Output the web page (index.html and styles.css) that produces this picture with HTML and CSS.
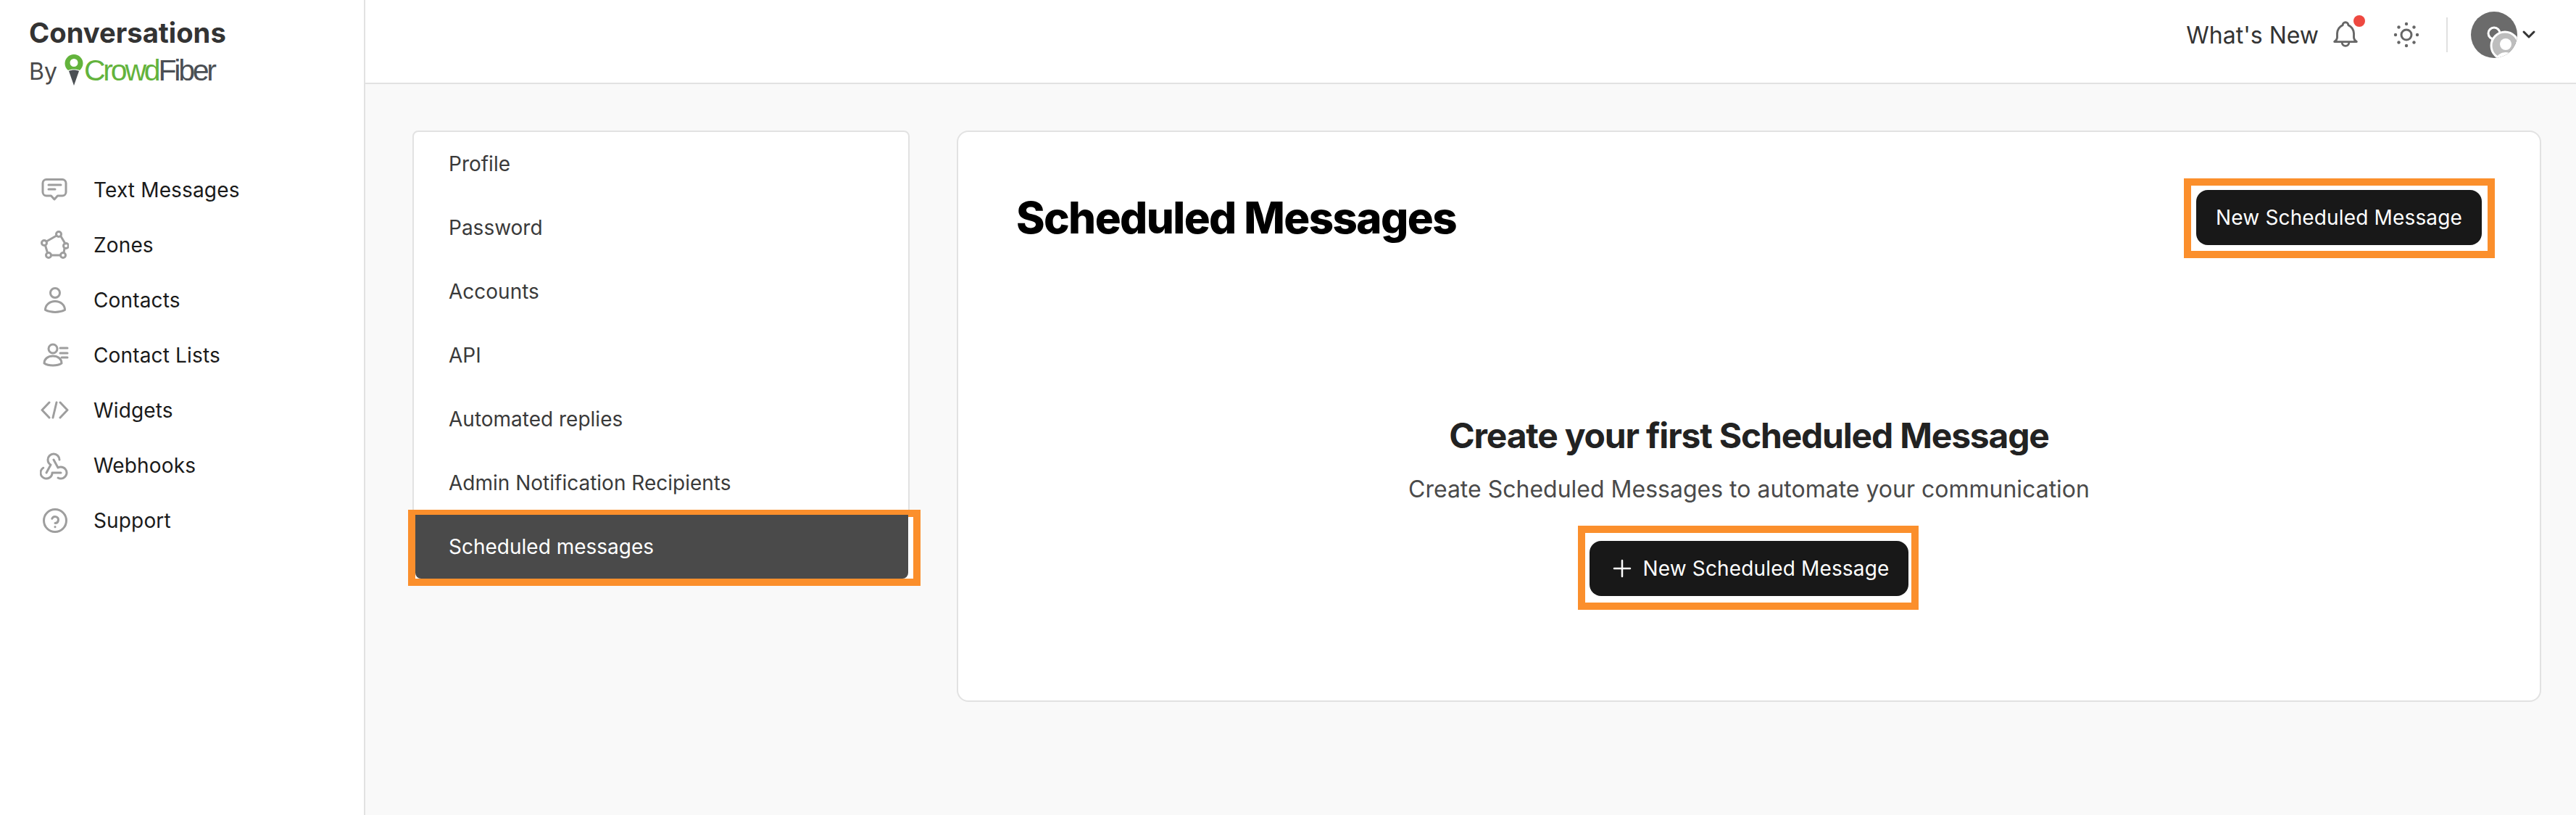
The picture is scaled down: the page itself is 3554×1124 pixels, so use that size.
FILE: index.html
```html
<!DOCTYPE html>
<html lang="en">

<head>
    <meta charset="UTF-8">
    <meta name="viewport" content="width=device-width, initial-scale=1.0">
    <title>Scheduled Messages</title>
    <link rel="stylesheet" href="styles.css">
</head>

<body>
    <!-- Left app navigation -->
    <aside class="sidebar">
        <div class="brand">
            <div class="brand-name">Conversations</div>
            <div class="brand-by">
                <span>By</span>
                <svg class="brand-pin" width="26" height="44" viewBox="0 0 26 44">
                    <path fill="#63b33c" fill-rule="evenodd" d="M13 0a12.500 12.500 0 0 1 12.500 12.500c0 4-2 7-4.500 9.500-4 -2-12-2-16 0C2 19.500.500 16.500.500 12.500A12.500 12.500 0 0 1 13 0zm0 6a5.500 5.500 0 1 0 0 11 5.500 5.500 0 0 0 0-11z"/>
                    <path fill="#4b4f54" d="M6 23c4-2 10-2 14 0L13 43z"/>
                </svg>
                <span class="logo-text"><span class="logo-green">Crowd</span>Fiber</span>
            </div>
        </div>
        <nav class="side-nav">
            <a class="side-link">
                <svg class="side-icon" viewBox="0 0 40 40">
                    <path d="M9 5.500h22a5 5 0 0 1 5 5v12.500a5 5 0 0 1-5 5h-6.500L20 33l-4.500-5H9a5 5 0 0 1-5-5V10.500a5 5 0 0 1 5-5z"/>
                    <path d="M12 13h17M12 19h9"/>
                </svg>
                Text Messages
            </a>
            <a class="side-link">
                <svg class="side-icon" viewBox="0 0 40 40">
                    <circle cx="26" cy="5" r="3.500"/><circle cx="6" cy="17" r="3.500"/><circle cx="36" cy="21" r="3.500"/><circle cx="12" cy="34" r="3.500"/><circle cx="32" cy="34" r="3.500"/>
                    <path d="M23 7L9 15M29 8l6 10M34 24.500l-1 6M16 34h12M7.500 20.500l3 10"/>
                </svg>
                Zones
            </a>
            <a class="side-link">
                <svg class="side-icon" viewBox="0 0 40 40">
                    <circle cx="21" cy="10" r="6.500"/>
                    <path d="M7.500 33.500c0-7 6-12 13.500-12s13.500 5 13.500 12c-4 2-9 3-13.500 3s-9.500-1-13.500-3z"/>
                </svg>
                Contacts
            </a>
            <a class="side-link">
                <svg class="side-icon" viewBox="0 0 40 40">
                    <circle cx="18" cy="11" r="6"/>
                    <path d="M6 31c0-6 5-10 12-10s12 4 12 10c-3 2-8 3-12 3s-9-1-12-3z"/>
                    <path d="M28 10h10M28 17h10M30 23h8"/>
                </svg>
                Contact Lists
            </a>
            <a class="side-link">
                <svg class="side-icon" viewBox="0 0 40 40">
                    <path d="M13 9L3 19.500 13 30M23 9l-5 21M28 9l10 10.500L28 30"/>
                </svg>
                Widgets
            </a>
            <a class="side-link">
                <svg class="side-icon side-icon-thin" viewBox="2.500 2 20 20">
                    <path d="M4.876 13.610a4 4 0 1 0 6.124 3.390h6"/>
                    <path d="M15.066 20.502a4 4 0 1 0 1.934-7.502c-.706 0-1.424.179-2 .5l-3-5.500"/>
                    <path d="M16 8a4 4 0 1 0-8 0c0 1.506.77 2.818 2 3.500l-3 5.500"/>
                </svg>
                Webhooks
            </a>
            <a class="side-link">
                <svg class="side-icon" viewBox="0 0 40 40">
                    <circle cx="21" cy="20" r="15.500"/>
                    <path d="M21 28.500v.2M21 23.500a4.500 4.500 0 1 0-4.200-6.200"/>
                </svg>
                Support
            </a>
        </nav>
    </aside>

    <div class="page">
        <!-- Top bar -->
        <header class="topbar">
            <span class="whats-new">What's New</span>
            <span class="bell">
                <svg width="46" height="46" viewBox="0 0 24 24" class="top-icon">
                    <path d="M10 5a2 2 0 1 1 4 0 7 7 0 0 1 4 6v3a4 4 0 0 0 2 3H4a4 4 0 0 0 2-3v-3a7 7 0 0 1 4-6"/>
                    <path d="M9.500 17.500a2.500 2.500 0 0 0 5 0"/>
                </svg>
                <span class="bell-dot"></span>
            </span>
            <svg class="sun top-icon-sun" width="40" height="40" viewBox="0 0 40 40">
                <circle class="sun-core" cx="20" cy="20" r="7"/>
                <circle cx="20" cy="5" r="2.200"/><circle cx="20" cy="35" r="2.200"/><circle cx="5" cy="20" r="2.200"/><circle cx="35" cy="20" r="2.200"/>
                <circle cx="9.500" cy="9.500" r="2.200"/><circle cx="30.500" cy="9.500" r="2.200"/><circle cx="9.500" cy="30.500" r="2.200"/><circle cx="30.500" cy="30.500" r="2.200"/>
            </svg>
            <span class="top-divider"></span>
            <svg class="avatar" width="64" height="64" viewBox="0 0 64 64">
                <clipPath id="avatarClip"><circle cx="32" cy="32" r="32"/></clipPath>
                <g clip-path="url(#avatarClip)">
                    <rect width="64" height="64" fill="#6b6b6b"/>
                    <circle cx="32" cy="30" r="8" fill="none" stroke="#fff" stroke-width="3"/>
                    <circle cx="47" cy="47" r="19" fill="#bdbdbd" stroke="#fff" stroke-width="3"/>
                    <circle cx="48" cy="45" r="8" fill="#fff"/>
                    <ellipse cx="48" cy="66" rx="13" ry="10" fill="#fff"/>
                </g>
            </svg>
            <svg class="caret" width="20" height="14" viewBox="0 0 20 14">
                <path d="M3 3l7 7 7-7"/>
            </svg>
        </header>

        <main class="content">
            <!-- Settings menu -->
            <nav class="settings-menu">
                <a class="settings-link">Profile</a>
                <a class="settings-link">Password</a>
                <a class="settings-link">Accounts</a>
                <a class="settings-link">API</a>
                <a class="settings-link">Automated replies</a>
                <a class="settings-link">Admin Notification Recipients</a>
                <div class="settings-current">
                    <span class="mark mark-menu"></span>
                    <a class="settings-link settings-active">Scheduled messages</a>
                </div>
            </nav>

            <section class="panel">
                <div class="panel-head">
                    <h1 class="panel-title">Scheduled Messages</h1>
                    <div class="marked">
                        <span class="mark mark-head"></span>
                        <button class="btn">New Scheduled Message</button>
                    </div>
                </div>
                <div class="empty">
                    <h2 class="empty-title">Create your first Scheduled Message</h2>
                    <p class="empty-text">Create Scheduled Messages to automate your communication</p>
                    <div class="marked">
                        <span class="mark mark-empty"></span>
                        <button class="btn btn-add">
                            <svg width="26" height="26" viewBox="0 0 26 26" class="plus"><path d="M13 2v22M2 13h22"/></svg>
                            New Scheduled Message
                        </button>
                    </div>
                </div>
            </section>
        </main>
    </div>
</body>

</html>
```

FILE: styles.css
```css
/* Page frame */
body {
    margin: 0;
    height: 1124px;
    overflow: hidden;
    display: flex;
    background-color: #f9f9f9;
    font-family: Inter, "Noto Sans", sans-serif;
    color: #1a1a1a;
}

/* Sidebar */
.sidebar {
    width: 502px;
    flex-shrink: 0;
    background-color: #fff;
    border-right: 2px solid #e2e2e2;
}

.brand {
    padding: 22px 0 0 40px;
    height: 224px;
    box-sizing: border-box;
}

.brand-name {
    font-size: 38.200px;
    font-weight: 700;
    line-height: 46px;
    color: #333;
}

.brand-by {
    display: flex;
    align-items: flex-end;
    height: 50px;
    margin-top: 1px;
    font-size: 32px;
    line-height: 40px;
    color: #4a4a4a;
}

.brand-pin {
    margin: 0 0 0 10px;
}

.logo-text {
    font-family: "Liberation Sans", sans-serif;
    font-size: 41px;
    line-height: 44px;
    letter-spacing: -3.200px;
    margin-left: 1px;
    color: #4b4f54;
}

.logo-green {
    color: #63b33c;
}

.side-nav {
    display: flex;
    flex-direction: column;
}

.side-link {
    display: flex;
    align-items: center;
    gap: 34px;
    height: 76px;
    padding-left: 55px;
    font-size: 28px;
    letter-spacing: 0.150px;
}

.side-icon {
    width: 40px;
    height: 40px;
    fill: none;
    stroke: #9e9e9e;
    stroke-width: 3;
    stroke-linecap: round;
    stroke-linejoin: round;
}

.side-icon-thin {
    stroke-width: 1.500;
}

/* Top bar */
.page {
    flex: 1;
    min-width: 0;
}

.topbar {
    display: flex;
    align-items: center;
    justify-content: flex-end;
    height: 96px;
    padding: 0 55px 18px 0;
    background-color: #fff;
    border-bottom: 2px solid #e2e2e2;
}

.whats-new {
    font-size: 32px;
    color: #333;
}

.bell {
    position: relative;
    display: flex;
    margin-left: 14px;
}

.top-icon {
    fill: none;
    stroke: #666;
    stroke-width: 1.500;
    stroke-linecap: round;
    stroke-linejoin: round;
}

.bell-dot {
    position: absolute;
    top: -4px;
    right: -4px;
    width: 16px;
    height: 16px;
    border-radius: 50%;
    background-color: #ee4840;
}

.sun {
    margin-left: 41px;
    fill: #666;
}

.sun-core {
    fill: none;
    stroke: #666;
    stroke-width: 3;
}

.top-divider {
    width: 2px;
    height: 48px;
    margin: 0 32px 0 35px;
    background-color: #e0e0e0;
}

.caret {
    margin-left: 6px;
    fill: none;
    stroke: #333;
    stroke-width: 3;
    stroke-linecap: round;
    stroke-linejoin: round;
}

/* Main content */
.content {
    display: flex;
    align-items: flex-start;
    gap: 65px;
    padding: 64px 48px 0 65px;
}

.settings-menu {
    width: 682px;
    flex-shrink: 0;
    display: flex;
    flex-direction: column;
    background-color: #fff;
    border: 2px solid #e2e2e2;
    border-radius: 8px;
}

.settings-link {
    display: flex;
    align-items: center;
    height: 88px;
    padding-left: 48px;
    font-size: 28px;
    color: #3a3a3a;
}

.settings-current {
    position: relative;
    height: 88px;
}

.settings-active {
    position: relative;
    box-sizing: border-box;
    margin-left: 2px;
    padding-left: 46px;
    background-color: #4a4a4a;
    color: #fff;
    border-radius: 0 0 8px 8px;
}

/* Orange annotation boxes drawn over the screenshot */
.mark {
    position: absolute;
    box-sizing: border-box;
    border: 10px solid #fb8f2c;
    background-color: #fff;
}

.mark-menu {
    top: -7px;
    left: -8px;
    right: -17px;
    bottom: -10px;
}

.mark-head {
    top: -16px;
    left: -17px;
    right: -18px;
    bottom: -18px;
}

.mark-empty {
    top: -21px;
    left: -16px;
    right: -14px;
    bottom: -19px;
}

.marked {
    position: relative;
}

.panel {
    flex: 1;
    box-sizing: border-box;
    height: 788px;
    padding: 80px;
    background-color: #fff;
    border: 2px solid #e2e2e2;
    border-radius: 16px;
}

.panel-head {
    display: flex;
    align-items: center;
    justify-content: space-between;
}

.panel-title {
    margin: 0;
    font-size: 60px;
    font-weight: 800;
    color: #000;
    letter-spacing: -1.600px;
}

.btn {
    position: relative;
    display: flex;
    align-items: center;
    height: 76px;
    padding: 0 27px;
    border: none;
    border-radius: 16px;
    background-color: #181818;
    color: #fff;
    font-family: inherit;
    font-size: 28px;
    letter-spacing: 0.150px;
}

.plus {
    margin: 0 16px 0 5px;
    fill: none;
    stroke: #fff;
    stroke-width: 2.500;
    stroke-linecap: round;
}

.empty {
    display: flex;
    flex-direction: column;
    align-items: center;
    margin-top: 233px;
}

.empty-title {
    margin: 0;
    font-size: 48px;
    line-height: 60px;
    font-weight: 700;
    color: #222;
    letter-spacing: -1.200px;
}

.empty-text {
    margin: 24px 0 51px;
    font-size: 32px;
    line-height: 40px;
    color: #4a4a4a;
}
```
